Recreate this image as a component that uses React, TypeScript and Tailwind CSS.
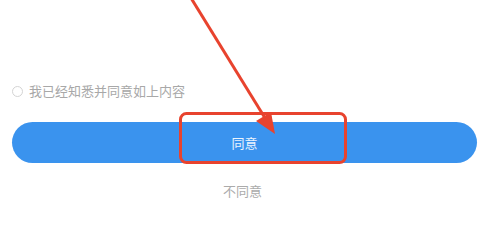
export default function App() {
  return (
    <div className="relative h-[219px] w-[485px] overflow-hidden bg-white font-['Noto_Sans_CJK_SC','Noto_Sans',sans-serif]">
      <div className="mt-[82px] flex h-[18px] items-center gap-[6px] pl-[12px]">
        <span className="h-[11px] w-[11px] rounded-full border border-[#d4d4d4]" />
        <span className="text-[13px] leading-[18px] text-[#a8a8a8]">我已经知悉并同意如上内容</span>
      </div>

      <button
        type="button"
        className="ml-[12px] mt-[22px] flex h-[41px] w-[465px] items-center justify-center rounded-full bg-[#3a93ee] text-[13px] text-white/90"
      >
        同意
      </button>

      <p className="mt-[19px] text-center text-[13px] leading-[18px] text-[#ababab]">不同意</p>

      {/* annotation overlay */}
      <svg className="pointer-events-none absolute inset-0" width="485" height="219" viewBox="0 0 485 219">
        <rect x="180.5" y="113.5" width="165" height="49" rx="6" fill="none" stroke="#e8432e" strokeWidth="3" />
        <line x1="191" y1="-2" x2="265" y2="118" stroke="#e8432e" strokeWidth="3" />
        <polygon points="275,134 271,112 256,121" fill="#e8432e" />
      </svg>
    </div>
  );
}
